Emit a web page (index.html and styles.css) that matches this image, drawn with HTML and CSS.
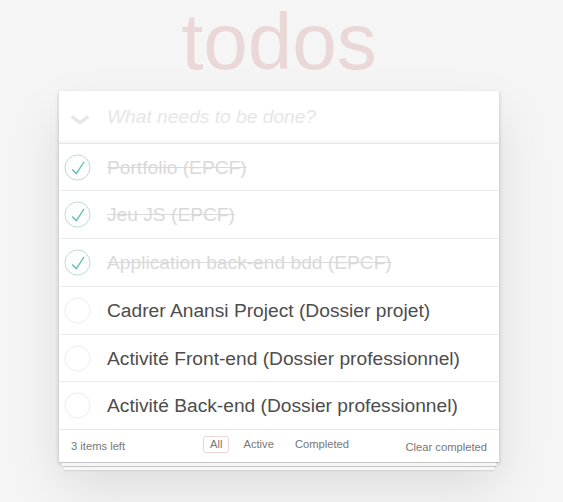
FILE: index.html
```html
<!DOCTYPE html>
<html lang="fr">
<head>
<meta charset="utf-8">
<title>todos</title>
<link rel="stylesheet" href="styles.css">
</head>
<body>
<h1 class="title">todos</h1>
<section class="todoapp">
  <header class="header">
    <span class="toggle-all">
      <svg width="20" height="12" viewBox="0 0 20 12"><path d="M1.5 2.5 L10 8.5 L18.5 2.5" fill="none" stroke="#e6e6e6" stroke-width="3.2" stroke-linecap="butt"/></svg>
    </span>
    <input class="new-todo" placeholder="What needs to be done?">
  </header>
  <ul class="todo-list">
    <li class="todo completed"><span class="check"><svg width="27" height="27" viewBox="0 0 27 27"><circle cx="13.5" cy="13.5" r="12.5" fill="none" stroke="#bddad5" stroke-width="1"/><path d="M19.6 7.6 L12.2 18.6 L8.6 15 L7.6 16 L12.4 20.8 L20.6 8.3 Z" fill="#5dc2af"/></svg></span><label>Portfolio (EPCF)</label></li>
    <li class="todo completed"><span class="check"><svg width="27" height="27" viewBox="0 0 27 27"><circle cx="13.5" cy="13.5" r="12.5" fill="none" stroke="#bddad5" stroke-width="1"/><path d="M19.6 7.6 L12.2 18.6 L8.6 15 L7.6 16 L12.4 20.8 L20.6 8.3 Z" fill="#5dc2af"/></svg></span><label>Jeu JS (EPCF)</label></li>
    <li class="todo completed"><span class="check"><svg width="27" height="27" viewBox="0 0 27 27"><circle cx="13.5" cy="13.5" r="12.5" fill="none" stroke="#bddad5" stroke-width="1"/><path d="M19.6 7.6 L12.2 18.6 L8.6 15 L7.6 16 L12.4 20.8 L20.6 8.3 Z" fill="#5dc2af"/></svg></span><label>Application back-end bdd (EPCF)</label></li>
    <li class="todo"><span class="check"><svg width="27" height="27" viewBox="0 0 27 27"><circle cx="13.5" cy="13.5" r="12.5" fill="none" stroke="#ededed" stroke-width="1"/></svg></span><label>Cadrer Anansi Project (Dossier projet)</label></li>
    <li class="todo"><span class="check"><svg width="27" height="27" viewBox="0 0 27 27"><circle cx="13.5" cy="13.5" r="12.5" fill="none" stroke="#ededed" stroke-width="1"/></svg></span><label>Activité Front-end (Dossier professionnel)</label></li>
    <li class="todo"><span class="check"><svg width="27" height="27" viewBox="0 0 27 27"><circle cx="13.5" cy="13.5" r="12.5" fill="none" stroke="#ededed" stroke-width="1"/></svg></span><label>Activité Back-end (Dossier professionnel)</label></li>
  </ul>
  <footer class="footer">
    <span class="todo-count">3 items left</span>
    <ul class="filters">
      <li><a class="selected">All</a></li>
      <li><a>Active</a></li>
      <li><a>Completed</a></li>
    </ul>
    <button class="clear-completed">Clear completed</button>
  </footer>
</section>
</body>
</html>
```
FILE: styles.css
```css
html, body {
  margin: 0;
  padding: 0;
}
html {
  min-height: 100%;
  background: #f5f5f5;
}
body {
  background: #f5f5f5;
  font-family: "Liberation Sans", Arial, sans-serif;
  color: #4d4d4d;
  font-size: 11.2px;
  min-height: 502px;
  padding-bottom: 1px;
  box-sizing: border-box;
}
.title {
  margin: 2px 0 9px;
  width: 440px;
  margin-left: 59px;
  font-size: 80px;
  line-height: 80px;
  font-weight: 400;
  text-align: center;
  color: rgba(175, 47, 47, 0.15);
}
.todoapp {
  width: 440px;
  margin: 0 0 39px 59px;
  background: #fff;
  position: relative;
  box-shadow: 0 0.8px 0.8px rgba(0, 0, 0, 0.2),
    0 6.4px 0 -2.4px #f6f6f6,
    0 7.2px 0.8px -2.4px rgba(0, 0, 0, 0.2),
    0 12.8px 0 -4.8px #f6f6f6,
    0 13.6px 1.6px -4.8px rgba(0, 0, 0, 0.2),
    0 2px 4px 0 rgba(0, 0, 0, 0.2),
    0 25px 50px 0 rgba(0, 0, 0, 0.1);
}
.header {
  display: flex;
  align-items: center;
  height: 52px;
  box-shadow: inset 0 -2px 1px rgba(0, 0, 0, 0.03);
}
.toggle-all {
  width: 48px;
  flex: none;
  display: flex;
  justify-content: center;
  padding-right: 7px;
  box-sizing: border-box;
  padding-top: 5px;
}
.toggle-all svg { display: block; }
.new-todo {
  flex: 1;
  min-width: 0;
  border: none;
  outline: none;
  background: transparent;
  font-family: inherit;
  font-size: 19.2px;
  line-height: 26px;
  padding: 0 12px 0 0;
  margin: 0;
  color: #4d4d4d;
}
.new-todo::placeholder {
  font-style: italic;
  color: #e6e6e6;
}
.todo-list {
  list-style: none;
  margin: 0;
  padding: 0;
  border-top: 1px solid #e6e6e6;
}
.todo {
  display: flex;
  align-items: center;
  height: 47px;
  border-bottom: 1px solid #ededed;
}
.todo:first-child { height: 46px; }
.todo:nth-child(5) { height: 46px; }
.todo:last-child { border-bottom: none; height: 47px; }
.check {
  width: 48px;
  flex: none;
  display: flex;
  padding-left: 5px;
  box-sizing: border-box;
}
.check svg { display: block; }
.todo label {
  font-size: 19.2px;
  line-height: 23px;
  color: #4d4d4d;
  white-space: nowrap;
}
.todo.completed label {
  color: #d9d9d9;
  text-decoration: line-through;
}
.footer {
  position: relative;
  display: flex;
  align-items: center;
  justify-content: space-between;
  height: 32px;
  padding: 0 12px;
  border-top: 1px solid #e6e6e6;
  color: #777;
}
.todo-count {
  width: 120px;
  line-height: 16px;
}
.filters {
  list-style: none;
  margin: 0;
  padding: 0;
  display: flex;
  gap: 7px;
  position: absolute;
  left: 144px;
  top: 6px;
}
.filters a {
  display: block;
  padding: 2px 6px;
  line-height: 11px;
  border: 1px solid transparent;
  border-radius: 3px;
  color: #777;
}
.filters a.selected {
  border-color: rgba(175, 47, 47, 0.2);
}
.clear-completed {
  border: none;
  background: none;
  font-family: inherit;
  font-size: 11.2px;
  color: #777;
  padding: 0;
  margin: 1px 0 0;
  line-height: 16px;
}
```
